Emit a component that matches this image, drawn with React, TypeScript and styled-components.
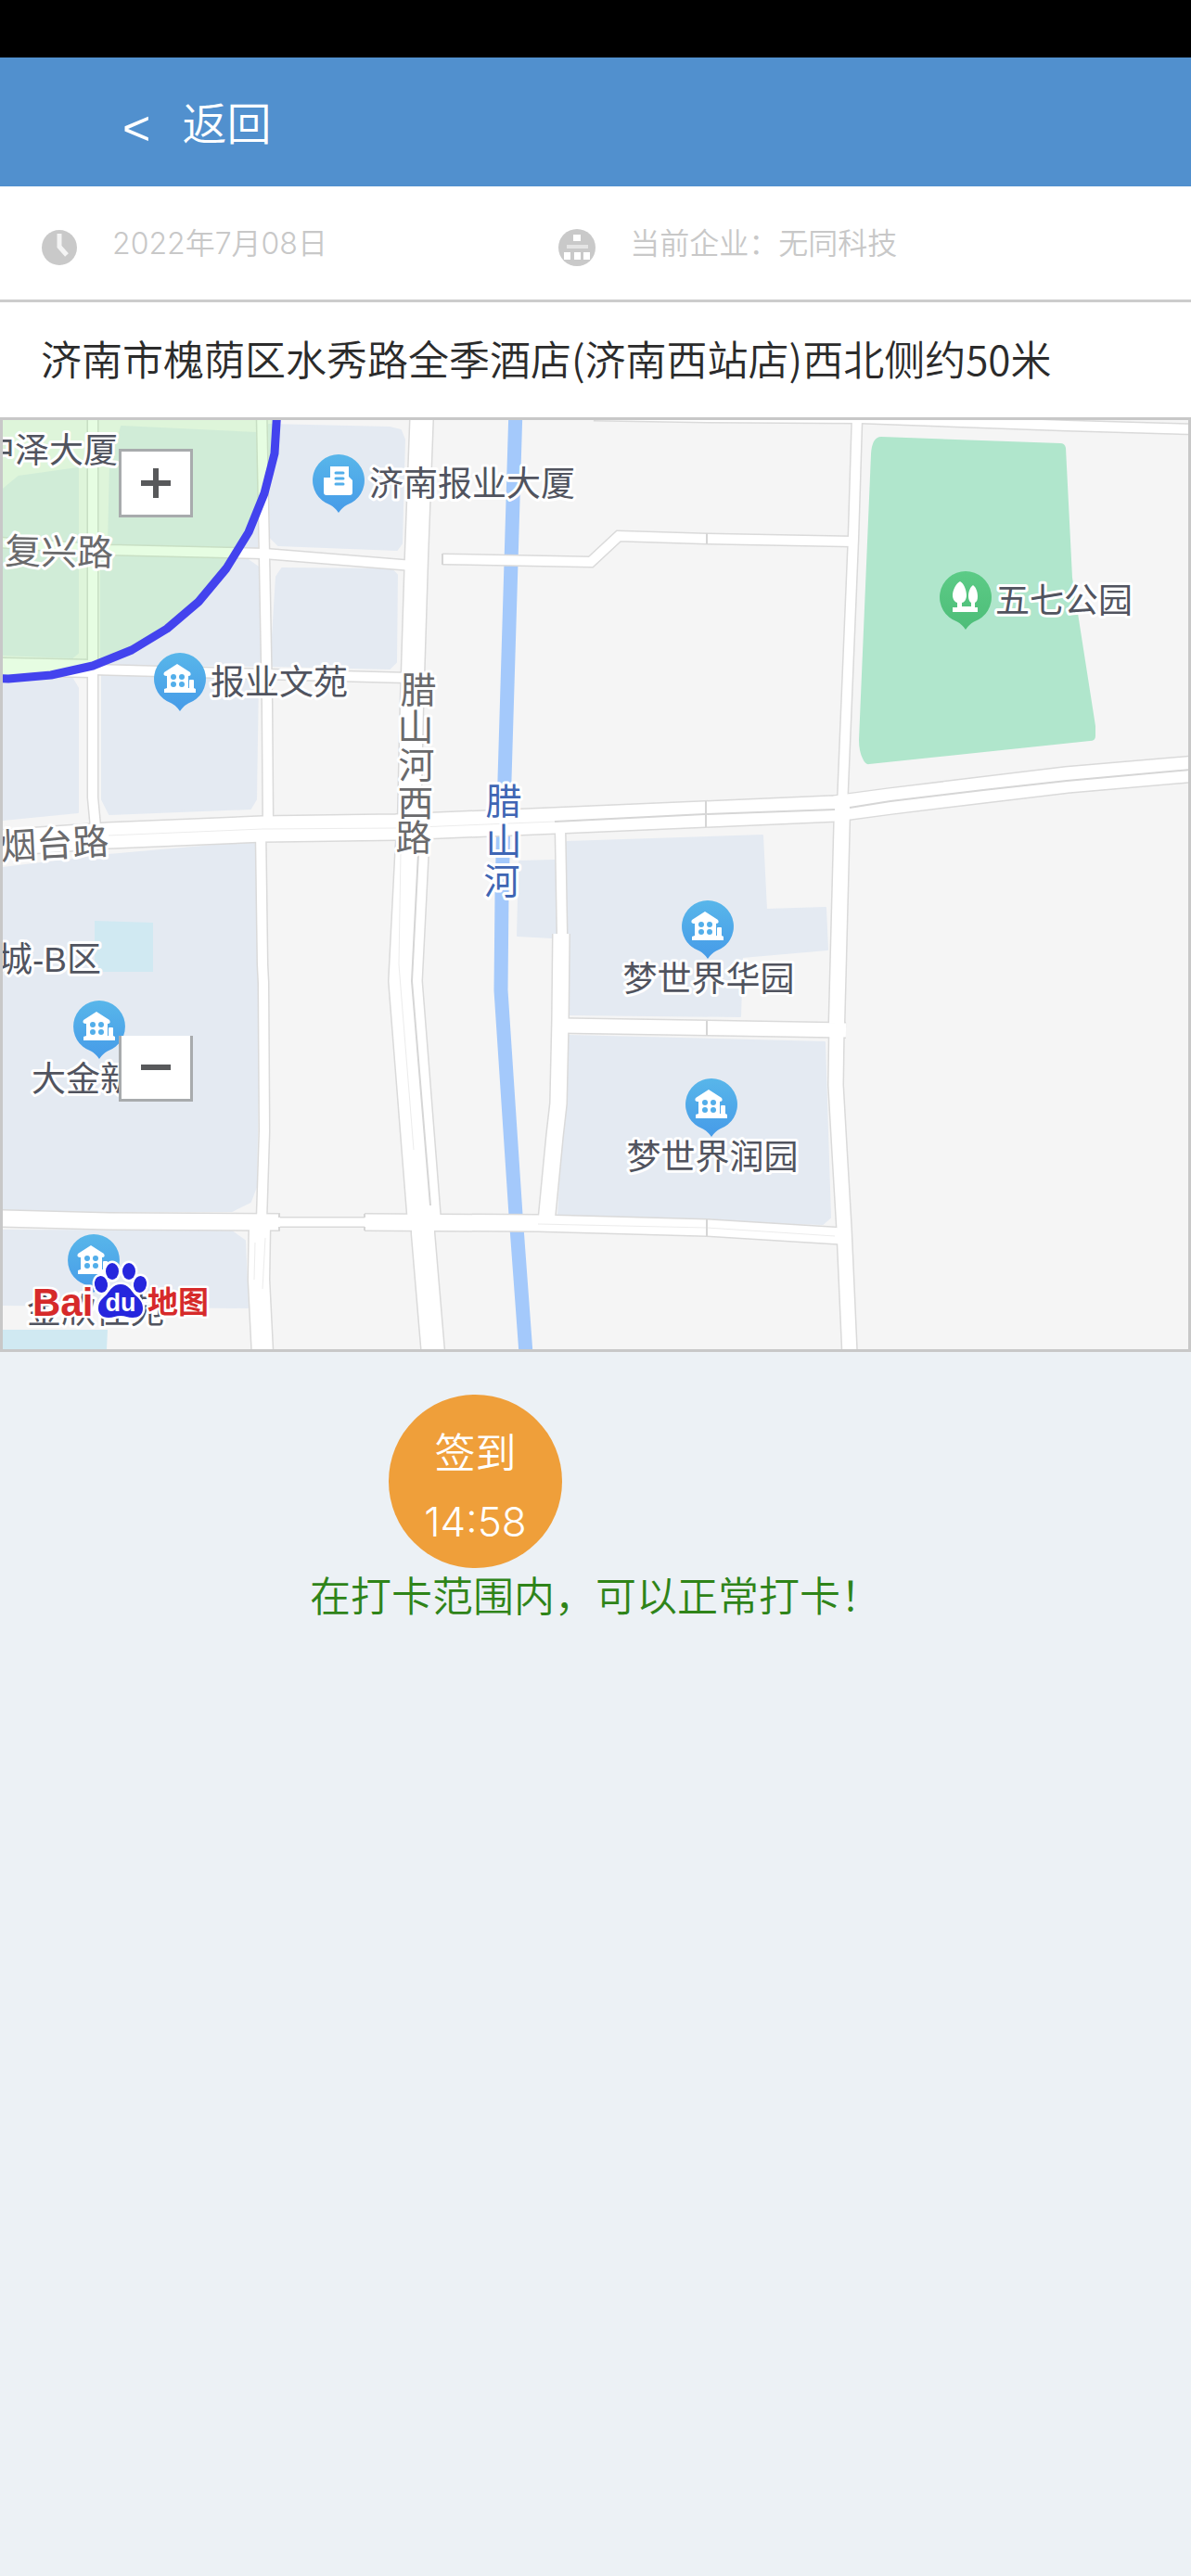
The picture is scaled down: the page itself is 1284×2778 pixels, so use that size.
import React from "react";
import styled, { createGlobalStyle } from "styled-components";

const FONT = `Inter, "Noto Sans CJK SC", sans-serif`;
const CJK_FONT = `"Noto Sans CJK SC", sans-serif`;
const MAP_FONT = `"Liberation Sans", "Noto Sans CJK SC", sans-serif`;

const GlobalStyle = createGlobalStyle`
  *, *::before, *::after { box-sizing: border-box; }
  html { background: #ecf1f5; }
  body { margin: 0; font-family: ${FONT}; font-weight: 350; color: #333; }
  button { font: inherit; color: inherit; cursor: pointer; }
`;

const Page = styled.div`
  min-height: 100vh;
  background: #ecf1f5;
`;

const StatusBar = styled.div`
  height: 62px;
  background: #000;
`;

const Header = styled.header`
  display: flex;
  align-items: center;
  height: 139px;
  padding: 4px 132px 0;
  background: #5190ce;
`;

const BackLink = styled.a`
  display: flex;
  align-items: center;
  gap: 34px;
  color: #fff;
  font-size: 48px;
  line-height: 72px;
  text-decoration: none;
`;

const BackArrow = styled.span`
  padding-top: 8px;
  font-family: "Liberation Sans", sans-serif;
  font-size: 52px;
`;

const InfoRow = styled.div`
  display: grid;
  grid-template-columns: 7fr 8fr;
  align-items: center;
  height: 125px;
  padding: 2px 44px 0;
  background: #fff;
  border-bottom: 3px solid #ccc;
`;

const InfoItem = styled.div`
  display: flex;
  align-items: center;
  gap: 37px;
  color: #c8c8c8;
  font-size: 32px;
  line-height: 48px;

  svg { display: block; width: 40px; height: 40px; margin-top: 8px; flex: none; }
`;

const Address = styled.p`
  margin: 0;
  padding: 28px 44px 32px;
  background: #fff;
  color: #2b2b2b;
  font-family: ${CJK_FONT};
  font-size: 44px;
  line-height: 64px;
`;

const MapFrame = styled.section`
  position: relative;
  border: 3px solid #c8c8c8;
  background: #f5f5f5;
`;

const MapCanvas = styled.svg`
  display: block;
  width: 100%;
  height: auto;
  font-family: ${MAP_FONT};
  font-weight: 400;
`;

const ZoomControl = styled.div`
  position: absolute;
  left: 125px;
  top: 31px;
  display: flex;
  flex-direction: column;
  gap: 559px;
`;

const ZoomButton = styled.button<{ $open?: boolean }>`
  display: flex;
  align-items: center;
  justify-content: center;
  width: 80px;
  height: ${(p) => (p.$open ? 71 : 74)}px;
  padding: 0;
  background: #fff;
  border: 3px solid #a8abad;
  border-top-width: ${(p) => (p.$open ? 0 : 3)}px;

  svg { display: block; width: 32px; height: 32px; }
`;

const CheckIn = styled.main`
  display: flex;
  flex-direction: column;
  align-items: center;
  padding-top: 46px;
`;

const PunchRow = styled.div`
  display: flex;
  width: 446px;
`;

const PunchButton = styled.button`
  display: flex;
  flex-direction: column;
  align-items: center;
  justify-content: center;
  width: 187px;
  height: 187px;
  padding: 12px 0 0;
  border: 0;
  border-radius: 50%;
  background: #ef9f3a;
  color: #fff;
  font-size: 44px;
  line-height: 74px;
`;

const Notice = styled.p`
  margin: 0;
  color: #2f8419;
  font-size: 44px;
  line-height: 62px;
`;

type Pt = [number, number];
const pts = (list: Pt[]) => list.map((p) => p.join(",")).join(" ");

const blocks: Pt[][] = [
  [[3, 528], [20, 514], [84, 505], [84, 704], [78, 709], [3, 706]],
  [[117, 588], [119, 500], [131, 460], [277, 467], [277, 592]],
  [[109, 598], [266, 603], [279, 612], [280, 718], [109, 716]],
  [[3, 730], [78, 732], [84, 742], [84, 876], [3, 884]],
  [[110, 728], [278, 732], [276, 862], [270, 872], [118, 878], [110, 862]],
  [[290, 458], [420, 461], [432, 464], [436, 474], [433, 586], [428, 593], [300, 588], [292, 580]],
  [[298, 622], [304, 613], [422, 614], [428, 620], [427, 714], [420, 721], [292, 718]],
  [[3, 936], [117, 922], [277, 908], [280, 1050], [276, 1280], [270, 1296], [250, 1306], [3, 1306]],
  [[3, 1327], [250, 1328], [264, 1338], [267, 1410], [3, 1407]],
  [[611, 908], [822, 901], [826, 981], [890, 979], [892, 1024], [800, 1032], [798, 1096], [613, 1094]],
  [[560, 929], [598, 928], [600, 1007], [595, 1011], [558, 1009]],
  [[613, 1117], [889, 1124], [895, 1313], [887, 1320], [602, 1311]],
];

const pools: Pt[][] = [
  [[102, 993], [165, 995], [165, 1048], [102, 1048]],
  [[3, 1434], [116, 1434], [115, 1456], [3, 1456]],
];

const roads: { w: number; p: Pt[] }[] = [
  { w: 10, p: [[100, 440], [100, 860], [103, 892]] },
  { w: 10, p: [[282, 440], [285, 600], [288, 760], [289, 892]] },
  { w: 10, p: [[281, 894], [283, 1040], [284, 1060], [285, 1220], [282, 1316]] },
  { w: 10, p: [[0, 585], [117, 593], [285, 597], [445, 610]] },
  { w: 18, p: [[0, 719], [100, 721]] },
  { w: 10, p: [[100, 722], [285, 727], [440, 731]] },
  { w: 24, p: [[455, 440], [449, 600], [444, 760], [441, 892]] },
  { w: 35, p: [[446, 892], [444, 920], [437, 1058], [457, 1312]] },
  { w: 24, p: [[456, 1312], [456, 1330], [467, 1460]] },
  { w: 27, p: [[0, 909], [117, 901], [283, 894], [427, 892], [598, 885], [760, 878], [900, 872], [960, 864], [1150, 841], [1290, 829]] },
  { w: 10, p: [[640, 448], [763, 450], [928, 451], [1150, 459], [1290, 463]] },
  { w: 10, p: [[477, 603], [637, 606], [667, 578], [762, 581], [920, 584]] },
  { w: 10, p: [[924, 450], [920, 580], [908, 870]] },
  { w: 16, p: [[908, 872], [902, 1104]] },
  { w: 15, p: [[902, 1104], [901, 1170], [905, 1240], [910, 1325], [916, 1460]] },
  { w: 10, p: [[604, 892], [606, 1008]] },
  { w: 17, p: [[605, 1007], [604, 1100], [602, 1190], [598, 1225], [589, 1318]] },
  { w: 15, p: [[604, 1106], [912, 1111]] },
  { w: 17, p: [[0, 1314], [117, 1317], [302, 1318]] },
  { w: 9, p: [[298, 1318], [396, 1318]] },
  { w: 17, p: [[393, 1318], [580, 1319], [762, 1324], [908, 1333]] },
  { w: 22, p: [[280, 1320], [279, 1380], [283, 1460]] },
];

const roadLines: Pt[][] = [
  [[117, 901], [283, 894], [427, 893], [598, 886]],
  [[432, 920], [430, 1040], [446, 1240]],
  [[580, 1320], [762, 1324], [900, 1333]],
  [[275, 1340], [274, 1380]],
  [[286, 1335], [283, 1390]],
];

const darkLines: Pt[][] = [
  [[598, 886], [760, 878], [900, 873]],
  [[916, 871], [960, 864], [1060, 852], [1150, 842], [1284, 830]],
  [[451, 920], [444, 1058], [464, 1300]],
  [[761, 864], [761, 892]],
  [[762, 575], [762, 587]],
  [[477, 597], [477, 609]],
  [[762, 1101], [762, 1117]],
  [[762, 1315], [762, 1333]],
  [[301, 1309], [301, 1313]],
  [[301, 1323], [301, 1327]],
  [[393, 1309], [393, 1313]],
  [[393, 1323], [393, 1327]],
];

const radius: Pt[] = [
  [-40, 730], [9, 732], [55, 728], [100, 718], [142, 701], [180, 678], [214, 649],
  [244, 613], [268, 574], [285, 532], [296, 489], [299, 440],
];

type PinKind = "home" | "office" | "park";

function Pin({ x, y, kind }: { x: number; y: number; kind: PinKind }) {
  return (
    <g transform={`translate(${x} ${y})`}>
      <path
        d="M0 0a28 28 0 0 1 9 54.500Q4 57 0 63Q-4 57-9 54.500A28 28 0 0 1 0 0Z"
        fill={kind === "park" ? "url(#pinGreen)" : "url(#pinBlue)"}
      />
      {kind === "home" && (
        <g>
          <path d="M-3 12L11 21Q13 25 9 25V38H10V30a1 1 0 0 1 1-1h3a1 1 0 0 1 1 1V38L17 39V43H-17V39L-14 38V25Q-19 25-17 21Z" fill="#fff" />
          <g fill="#52aeea">
            <circle cx="-7" cy="26" r="3" />
            <circle cx="2" cy="26" r="3" />
            <circle cx="-7" cy="34" r="3" />
            <circle cx="2" cy="34" r="3" />
          </g>
        </g>
      )}
      {kind === "office" && (
        <g>
          <path d="M-9 13H11V24L15 28V41a3 3 0 0 1-3 3H-13a3 3 0 0 1-3-3V25H-9Z" fill="#fff" />
          <path d="M-3 20H5M-3 26H5M-3 32H5" stroke="#52aeea" strokeWidth="3" strokeLinecap="round" />
        </g>
      )}
      {kind === "park" && (
        <path
          d="M-6 11C-2 13 1 20 1 26C1 31-2 34-4 34V38H6V34C4 33 3 30 3 27C3 22 5 17 8 15C11 17 13 22 13 27C13 31 12 33 10 34V39H13V44H-14V39H-9V34C-12 33-14 30-14 26C-14 20-10 13-6 11Z"
          fill="#fff"
        />
      )}
    </g>
  );
}

const MapLabel = styled.text<{ $tone?: "place" | "road" | "water" }>`
  font-size: ${(p) => (p.$tone === "road" || p.$tone === "water" ? 39 : 37)}px;
  fill: ${(p) => (p.$tone === "road" ? "#6a6a6c" : p.$tone === "water" ? "#3f66b4" : "#51545f")};
  stroke: #fff;
  stroke-width: 6px;
  stroke-linejoin: round;
  paint-order: stroke;
`;

const LogoText = styled.text<{ $size: number; $white?: boolean }>`
  font-family: "Liberation Sans", "Noto Sans CJK SC", sans-serif;
  font-weight: 700;
  font-size: ${(p) => p.$size}px;
  fill: ${(p) => (p.$white ? "#fff" : "#d62a2a")};
  stroke: #fff;
  stroke-width: ${(p) => (p.$white ? 0 : 5)}px;
  stroke-linejoin: round;
  paint-order: stroke;
`;

function Column({ text, tone, at }: { text: string; tone: "road" | "water"; at: Pt[] }) {
  return (
    <>
      {[...text].map((c, i) => (
        <MapLabel key={i} $tone={tone} x={at[i][0]} y={at[i][1]} textAnchor="middle">
          {c}
        </MapLabel>
      ))}
    </>
  );
}

function BaiduLogo() {
  const paw = (
    <>
      <ellipse cx="121" cy="1371" rx="7" ry="9" />
      <ellipse cx="139" cy="1371" rx="7" ry="9" />
      <ellipse cx="109" cy="1385" rx="7" ry="9" transform="rotate(-10 109 1385)" />
      <ellipse cx="151" cy="1385" rx="7" ry="9" transform="rotate(10 151 1385)" />
      <path d="M130 1385C138 1385 141 1391 145 1396C150 1400 154 1404 154 1411C154 1418 149 1421 143 1421C138 1421 135 1419 130 1419C125 1419 122 1421 117 1421C110 1421 106 1417 106 1411C106 1403 111 1400 115 1396C119 1391 122 1385 130 1385Z" />
    </>
  );
  return (
    <g>
      <LogoText $size={42} x="35" y="1419">Bai</LogoText>
      <LogoText $size={33} x="159" y="1416">地图</LogoText>
      <g fill="#fff" stroke="#fff" strokeWidth="5">{paw}</g>
      <g fill="#2626dd">{paw}</g>
      <LogoText $size={27} $white x="130" y="1414" textAnchor="middle">du</LogoText>
    </g>
  );
}

function CityMap() {
  return (
    <MapCanvas viewBox="3 453 1278 1002" role="img" aria-label="百度地图">
      <defs>
        <linearGradient id="pinBlue" x1="0" y1="0" x2="0" y2="1">
          <stop offset="0" stopColor="#58b6ea" />
          <stop offset="1" stopColor="#469be8" />
        </linearGradient>
        <linearGradient id="pinGreen" x1="0" y1="0" x2="0" y2="1">
          <stop offset="0" stopColor="#5ccb86" />
          <stop offset="1" stopColor="#4dbd78" />
        </linearGradient>
      </defs>
      <g fill="#e4eaf2" stroke="#e4eaf2" strokeWidth="2" strokeLinejoin="round">
        {blocks.map((b, i) => <polygon key={i} points={pts(b)} />)}
      </g>
      <g fill="#d0e9f2">
        {pools.map((b, i) => <polygon key={i} points={pts(b)} />)}
      </g>
      <path
        d="M950 471L1143 478Q1148 478 1149 483L1156 623L1181 783V794Q1181 799 1175 799L937 824Q933 825 930 818Q926 810 926 798L939 490Q940 471 950 471Z"
        fill="#b0e6cc"
      />
      <path
        d="M556 440L544 840L541 965L540 1068L556 1310L567 1460"
        fill="none" stroke="#a4c9fb" strokeWidth="15"
      />
      <g fill="none" stroke="#dadada">
        {roads.map((r, i) => <polyline key={i} points={pts(r.p)} strokeWidth={r.w + 3} />)}
      </g>
      <g fill="none" stroke="#fff">
        {roads.map((r, i) => <polyline key={i} points={pts(r.p)} strokeWidth={r.w} />)}
      </g>
      <g fill="none" stroke="#ececec" strokeWidth="1">
        {roadLines.map((l, i) => <polyline key={i} points={pts(l)} />)}
      </g>
      <g fill="none" stroke="#d6d6d6" strokeWidth="2">
        {darkLines.map((l, i) => <polyline key={i} points={pts(l)} />)}
      </g>
      <polygon points={pts([...radius, [-40, 440]])} fill="#80f46f" fillOpacity="0.2" />
      <polyline points={pts(radius)} fill="none" stroke="#4343ee" strokeWidth="9" strokeLinejoin="round" />

      <Pin x={365} y={490} kind="office" />
      <Pin x={194} y={704} kind="home" />
      <Pin x={1041} y={616} kind="park" />
      <Pin x={107} y={1079} kind="home" />
      <Pin x={101} y={1331} kind="home" />
      <Pin x={763} y={971} kind="home" />
      <Pin x={767} y={1163} kind="home" />

      <MapLabel x="127" y="499" textAnchor="end">中泽大厦</MapLabel>
      <MapLabel x="398" y="535">济南报业大厦</MapLabel>
      <MapLabel x="227" y="749">报业文苑</MapLabel>
      <MapLabel x="1073" y="661">五七公园</MapLabel>
      <MapLabel x="109" y="1048" textAnchor="end">城-B区</MapLabel>
      <MapLabel x="108" y="1177" textAnchor="middle">大金新苑</MapLabel>
      <MapLabel x="103" y="1427" textAnchor="middle">金欣佳苑</MapLabel>
      <MapLabel x="764" y="1069" textAnchor="middle">梦世界华园</MapLabel>
      <MapLabel x="768" y="1261" textAnchor="middle">梦世界润园</MapLabel>
      <MapLabel $tone="road" x="5" y="608" transform="rotate(1 5 608)">复兴路</MapLabel>
      <MapLabel $tone="road" x="1" y="927" transform="rotate(-3 1 927)">烟台路</MapLabel>
      <Column tone="road" text="腊山河西路" at={[[451, 758], [448, 798], [449, 839], [448, 880], [446, 917]]} />
      <Column tone="water" text="腊山河" at={[[543, 878], [543, 921], [541, 964]]} />
      <BaiduLogo />
    </MapCanvas>
  );
}

export default function App() {
  return (
    <Page>
      <GlobalStyle />
      <StatusBar />
      <Header>
        <BackLink href="#back">
          <BackArrow>&lt;</BackArrow>
          返回
        </BackLink>
      </Header>
      <InfoRow>
        <InfoItem>
          <svg viewBox="0 0 40 40" aria-hidden="true">
            <circle cx="20" cy="20" r="19" fill="#c9c9c9" />
            <path d="M20 5V19L28 28" fill="none" stroke="#f4f4f4" strokeWidth="5" />
          </svg>
          <span>2022年7月08日</span>
        </InfoItem>
        <InfoItem>
          <svg viewBox="0 0 40 40" aria-hidden="true">
            <circle cx="20" cy="20" r="20" fill="#c9c9c9" />
            <path d="M16 6H24V13H16ZM6 25H13V33H6ZM17 25H24V33H17ZM27 25H34V33H27Z" fill="#fff" />
            <path d="M9 19H32" fill="none" stroke="#e4e4e4" strokeWidth="4" />
          </svg>
          <span>当前企业：无同科技</span>
        </InfoItem>
      </InfoRow>
      <Address>济南市槐荫区水秀路全季酒店(济南西站店)西北侧约50米</Address>
      <MapFrame>
        <CityMap />
        <ZoomControl>
          <ZoomButton type="button" aria-label="放大">
            <svg viewBox="0 0 32 32" aria-hidden="true">
              <path d="M0 16H32M16 0V32" stroke="#58595b" strokeWidth="6" />
            </svg>
          </ZoomButton>
          <ZoomButton type="button" aria-label="缩小" $open>
            <svg viewBox="0 0 32 32" aria-hidden="true">
              <path d="M0 16H32" stroke="#58595b" strokeWidth="6" />
            </svg>
          </ZoomButton>
        </ZoomControl>
      </MapFrame>
      <CheckIn>
        <PunchRow>
          <PunchButton type="button">
            <span>签到</span>
            <span>14:58</span>
          </PunchButton>
        </PunchRow>
        <Notice>在打卡范围内，可以正常打卡！</Notice>
      </CheckIn>
    </Page>
  );
}
